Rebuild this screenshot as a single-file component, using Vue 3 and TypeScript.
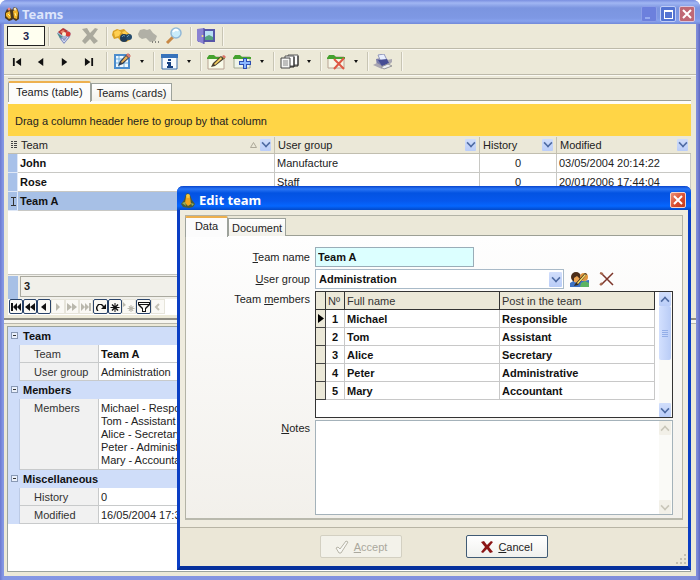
<script setup lang="ts">
import { ref } from 'vue'

interface TeamRow { name: string; group: string; history: number; modified: string; current?: boolean }
interface Member { no: number; name: string; post: string }

const teams: TeamRow[] = [
  { name: 'John', group: 'Manufacture', history: 0, modified: '03/05/2004 20:14:22' },
  { name: 'Rose', group: 'Staff', history: 0, modified: '20/01/2006 17:44:04' },
  { name: 'Team A', group: 'Administration', history: 0, modified: '16/05/2004 17:33:10', current: true },
]
const members: Member[] = [
  { no: 1, name: 'Michael', post: 'Responsible' },
  { no: 2, name: 'Tom', post: 'Assistant' },
  { no: 3, name: 'Alice', post: 'Secretary' },
  { no: 4, name: 'Peter', post: 'Administrative' },
  { no: 5, name: 'Mary', post: 'Accountant' },
]
const groups = ['Administration', 'Manufacture', 'Staff']

const recordCount = ref('3')
const teamName = ref('Team A')
const userGroup = ref('Administration')
const notes = ref('')

const moves = [
  { label: 'First', d: 'M1 1h2v8h-2zM10 1v8l-6-4z' },
  { label: 'Previous', d: 'M8 1v8l-6-4z' },
  { label: 'Next', d: 'M2 1v8l6-4z' },
  { label: 'Last', d: 'M8 1h2v8h-2zM1 1v8l6-4z' },
]
const navigator = [
  { label: 'First record', on: true, d: 'M1 1h2v8h-2zM7 1v8l-4-4zM11 1v8l-4-4z' },
  { label: 'Previous page', on: true, d: 'M6 1v8l-5-4zM11 1v8l-5-4z' },
  { label: 'Previous record', on: true, d: 'M8 1v8l-5-4z' },
  { label: 'Next record', on: false, d: 'M4 1v8l4-4z' },
  { label: 'Next page', on: false, d: 'M1 1v8l5-4zM6 1v8l5-4z' },
  { label: 'Last record', on: false, d: 'M9 1h2v8h-2zM1 1v8l4-4zM5 1v8l4-4z' },
  { label: 'Refresh', on: true, d: 'M2 9L1 7V5l2-3h4l2 2 2-2v5H6l2-2-2-2H4L2.500 5v2l1 2z' },
  { label: 'Save bookmark', on: true, d: 'M5.500 1h1v3l2-2 1 1-2 2h3v1h-3l2 2-1 1-2-2v3h-1V7l-2 2-1-1 2-2h-3V5h3l-2-2 1-1 2 2z' },
  { label: 'Go to bookmark', on: false, d: 'M0 0v5l3-2zM7.500 3h1v2l2-1 0 1-1 1h2v1h-2l1 2h-1l-1-1v2h-1V8l-1 1h-1l1-2h-2V6h2l-1-2h1l1 1z' },
  { label: 'Filter', on: true, d: 'M0 0h12v3L8 7v3H4V7L0 3zM1 1v1h10V1zM2 3l3 3v3h2V6l3-3z' },
]
</script>

<template>
  <main class="window">
    <header class="titlebar">
      <svg class="app-icon" width="16" height="16" viewBox="0 0 16 16">
        <path d="M1 7l2-4 3-1 2 2 2-3 3 1 2 5v6l-3 2-3-2-1 1-3 1-4-3z" fill="#4a3920" />
        <path d="M2 7l4-2 1 7-2 1-3-3zM9 5l4-2 1 4-1 6-3-1z" fill="#f0b429" />
        <circle cx="5" cy="3" r="1.500" fill="#e88" /><circle cx="11" cy="3" r="1.500" fill="#f2dfb5" />
        <path d="M4 8l2 2M11 7l1 3" stroke="#fff0a0" />
      </svg>
      <h1>Teams</h1>
      <div class="win-buttons">
        <button class="win-btn min" aria-label="Minimize"><svg width="14" height="14"><path d="M3 10h5v2H3z" fill="#96abf0" /></svg></button>
        <button class="win-btn" aria-label="Maximize"><svg width="14" height="14"><path d="M3 3h9v9H3zM4 5v6h7V5z" fill="#fff" fill-rule="evenodd" /></svg></button>
        <button class="win-btn close faded" aria-label="Close"><svg width="14" height="14"><path d="M3 3l8 8M11 3l-8 8" stroke="#fff" stroke-width="2" /></svg></button>
      </div>
    </header>

    <div class="client">
      <div class="toolbar main-tools">
        <input v-model="recordCount" class="count" aria-label="Record count" />
        <i class="sep"></i>
        <button class="tool" aria-label="Properties">
          <svg width="18" height="18" viewBox="0 0 18 18"><path d="M2 6l7-5 7 5-1 4-6 6-5-6z" fill="#a9b3d4" /><path d="M3 5l5-4 5 3-6 4z" fill="#b8342f" /><path d="M5 5l3-2 2 1-3 2z" fill="#e98a72" /><path d="M4 9l5 3 6-4-1 3-5 6-4-5z" fill="#8793c4" /><circle cx="13" cy="7" r="2.500" fill="#d83c36" /><circle cx="9" cy="7" r="2" fill="#fff2d0" /><path d="M2 6l3 2 3 2-3 1z" fill="#4b8f86" /><path d="M7 12l2 3 4-5" stroke="#dfe5f5" fill="none" /></svg>
        </button>
        <button class="tool" aria-label="Delete">
          <svg width="18" height="18" viewBox="0 0 18 18"><path d="M1 2l5-1 3 5 5-5 3 1-5 7 5 5-4 3-4-5-5 5-3-3 5-6z" fill="#aaa99d" /></svg>
        </button>
        <i class="sep"></i>
        <button class="tool" aria-label="Find">
          <svg width="22" height="18" viewBox="0 0 22 18"><path d="M1 8l1-4 4-2 3 1 4-1 3 3 4 3-1 5-4 2-5-1-3-3-4 1z" fill="#d9a126" /><path d="M3 5l4-2 3 2-2 4-4 1zM11 5l3-1 3 3-4 1z" fill="#ffd052" /><circle cx="13" cy="11" r="4" fill="#1e3b59" /><circle cx="18" cy="10" r="3" fill="#234b6d" /><path d="M11 10a2 2 0 0 1 3-1M16 10l2-2" stroke="#689ab5" fill="none" /></svg>
        </button>
        <button class="tool" aria-label="Find next">
          <svg width="22" height="18" viewBox="0 0 22 18"><path d="M1 7l2-4 4-1 3 1 3-1 3 4 4 3-2 5-5 1-4-4-4 1-3-2z" fill="#b1b0a6" /><path d="M15 15h1M18 15h1M21 15h1" stroke="#85857e" stroke-width="2" /></svg>
        </button>
        <button class="tool" aria-label="Zoom">
          <svg width="18" height="18" viewBox="0 0 18 18"><path d="M2 16l6-6" stroke="#c88845" stroke-width="3" /><circle cx="11" cy="6" r="5" fill="#c8ebfa" stroke="#92b9d7" stroke-width="1.500" /><path d="M8 5q3-4 5-1" stroke="#fff" stroke-width="2" fill="none" /></svg>
        </button>
        <i class="sep"></i>
        <button class="tool" aria-label="Exit">
          <svg width="18" height="16" viewBox="0 0 18 16"><path d="M1 1h17v13H1z" fill="#5756a9" /><path d="M8 3h8v9H8z" fill="#b8dff5" /><path d="M8 9l4-2 4 2v3H8z" fill="#54a27f" /><path d="M0 1l7-1v16l-7-3z" fill="#8a82d2" /><path d="M7 0v16" stroke="#4a48a0" /><circle cx="5.500" cy="8" r="1" fill="#f8e680" /></svg>
        </button>
        <i class="sep"></i>
      </div>

      <div class="toolbar">
        <button v-for="m in moves" :key="m.label" class="tool move" :aria-label="m.label">
          <svg width="10" height="8" viewBox="0 1 11 8" preserveAspectRatio="none"><path :d="m.d" fill="#111" /></svg>
        </button>
        <i class="sep"></i>
        <button class="tool" aria-label="Edit table">
          <svg width="17" height="17" viewBox="0 0 17 17"><path d="M1 2h14v13H1z" fill="#eef8ff" stroke="#4c8dcd" stroke-width="2" /><path d="M2 6h12M2 10h12M5 3v11M10 3v11" stroke="#70b0df" /><path d="M4 13l2-5 7-7 3 3-7 7z" fill="#333e52" /><path d="M7 9l5-6 2 2-6 5z" fill="#e8af55" /><path d="M12 2l2-2 3 3-2 2z" fill="#d77c71" /></svg>
        </button>
        <button class="drop" aria-label="Edit options"></button>
        <i class="sep"></i>
        <button class="tool" aria-label="Information">
          <svg width="17" height="16" viewBox="0 0 17 16"><path d="M1 1h15v14H1z" fill="#f7fbff" stroke="#376cab" stroke-width="1" /><path d="M0 0h17v4H0z" fill="#3773bb" /><path d="M7 5h3v2H7zM6 8h4v4h2v2H6v-2h1v-2H6z" fill="#174181" /></svg>
        </button>
        <button class="drop" aria-label="Information options"></button>
        <i class="sep"></i>
        <button class="tool" aria-label="Edit record">
          <svg width="19" height="16" viewBox="0 0 19 16"><path d="M1 3h16v12H1z" fill="#f9fbe9" stroke="#b8a393" /><path d="M0 4l2-3h5l2 2h9v2H0z" fill="#45a22e" /><path d="M4 13l2-4 8-7 3 3-9 7z" fill="#4a3e2d" /><path d="M7 10l7-7 1 2-7 6z" fill="#f7d363" /><path d="M15 2l2-1 2 2-2 2z" fill="#da7366" /></svg>
        </button>
        <button class="tool" aria-label="Add record">
          <svg width="19" height="16" viewBox="0 0 19 16"><path d="M1 3h16v11H1z" fill="#eff4e9" stroke="#a3aa92" /><path d="M0 4l2-3h5l2 2h9v2H0z" fill="#45a22e" /><path d="M10 4h4v3h4v4h-4v4h-4v-4H6V7h4z" fill="#2f4fb2" /><path d="M11 5h2v3h4v2h-4v4h-2v-4H7V8h4z" fill="#8cb8ff" /></svg>
        </button>
        <button class="drop" aria-label="Add options"></button>
        <i class="sep"></i>
        <button class="tool" aria-label="Copies">
          <svg width="19" height="16" viewBox="0 0 19 16"><path d="M8 1h10v10H8z" fill="#fff" stroke="#555" /><path d="M18 2v10h-8" stroke="#222" fill="none" /><path d="M5 2h9v10H5z" fill="#fff" stroke="#555" /><path d="M14 3v10H6" stroke="#222" fill="none" /><path d="M1 4h9v10H1z" fill="#f5f5f3" stroke="#444" /><path d="M3 7h5M3 9h5M3 11h5" stroke="#888" /></svg>
        </button>
        <button class="drop" aria-label="Copy options"></button>
        <i class="sep"></i>
        <button class="tool" aria-label="Delete record">
          <svg width="19" height="16" viewBox="0 0 19 16"><path d="M1 3h16v11H1z" fill="#f7f6e7" stroke="#b8a393" /><path d="M0 4l2-3h5l2 2h9v2H0z" fill="#45a22e" /><path d="M7 5l10 10M17 4L7 15" stroke="#de5844" stroke-width="2" /></svg>
        </button>
        <button class="drop" aria-label="Delete options"></button>
        <i class="sep"></i>
        <button class="tool" aria-label="Print">
          <svg width="20" height="16" viewBox="0 0 20 16"><path d="M3 5l5-1 7 6-2 5-9-3z" fill="#7c7ea9" /><path d="M5 1l6-1 3 6-6 2z" fill="#e9efff" stroke="#9298bb" /><path d="M0 11l4-2 7 4-2 2zM14 6l5-1v3l-4 4z" fill="#aaa7b2" /><path d="M5 6l9-1 2 4-7 3z" fill="#454c94" /><path d="M8 13l7-3 4 2-8 3z" fill="#eef0f5" stroke="#999" /></svg>
        </button>
        <i class="sep"></i>
      </div>

      <div class="sheet">
        <div class="tabs">
          <button class="tab active">Teams (table)</button>
          <button class="tab">Teams (cards)</button>
        </div>
        <div class="group-panel">Drag a column header here to group by that column</div>
        <table class="teams">
          <colgroup><col class="c-ind" /><col /><col class="c-group" /><col class="c-hist" /><col class="c-mod" /></colgroup>
          <thead>
            <tr>
              <th class="ind"><svg width="6" height="8"><path d="M0 .5h2M0 2.500h2M0 4.500h2M0 6.500h2M3 .5h3M3 2.500h3M3 4.500h3M3 6.500h3" stroke="#444" /></svg></th>
              <th><div class="head"><span>Team</span><svg class="sort" width="7" height="6"><path d="M.5 5.500h6L3.500.5z" fill="none" stroke="#aca899" /></svg><button class="filter" aria-label="Filter Team"></button></div></th>
              <th><div class="head"><span>User group</span><button class="filter" aria-label="Filter User group"></button></div></th>
              <th><div class="head"><span>History</span><button class="filter" aria-label="Filter History"></button></div></th>
              <th><div class="head"><span>Modified</span><button class="filter" aria-label="Filter Modified"></button></div></th>
            </tr>
          </thead>
          <tbody>
            <tr v-for="t in teams" :key="t.name" :class="{ current: t.current }">
              <td class="ind"><svg v-if="t.current" width="6" height="9"><path d="M0 .5h5M2.500 1v7M0 8.500h5" stroke="#333" fill="none" /></svg></td>
              <td class="bold">{{ t.name }}</td>
              <td>{{ t.group }}</td>
              <td class="mid">{{ t.history }}</td>
              <td>{{ t.modified }}</td>
            </tr>
          </tbody>
        </table>
        <div class="blank"></div>
        <div class="summary"><i></i><div>3</div></div>
        <div class="navigator">
          <button v-for="n in navigator" :key="n.label" class="nav" :class="{ on: n.on }" :disabled="!n.on" :aria-label="n.label">
            <svg width="12" height="10" viewBox="0 0 12 10"><path :d="n.d" fill-rule="evenodd" /></svg>
          </button>
          <button class="nav slide" aria-label="Scroll left"><svg width="12" height="10"><path d="M7 2L4 5l3 3" fill="none" stroke="#c4c1b5" stroke-width="2" /></svg></button>
        </div>
      </div>

      <div class="splitter"></div>

      <div class="details">
        <table class="props">
          <colgroup><col class="p-ind" /><col class="p-name" /><col /></colgroup>
          <tbody>
            <tr class="group"><th colspan="3"><button class="fold" aria-label="Collapse Team"></button>Team</th></tr>
            <tr><td></td><th>Team</th><td class="bold">Team A</td></tr>
            <tr><td></td><th>User group</th><td>Administration</td></tr>
            <tr class="group"><th colspan="3"><button class="fold" aria-label="Collapse Members"></button>Members</th></tr>
            <tr class="tall"><td></td><th>Members</th><td><div v-for="m in members" :key="m.no">{{ m.name }} - {{ m.post }}</div></td></tr>
            <tr class="group"><th colspan="3"><button class="fold" aria-label="Collapse Miscellaneous"></button>Miscellaneous</th></tr>
            <tr><td></td><th>History</th><td>0</td></tr>
            <tr><td></td><th>Modified</th><td>16/05/2004 17:33:10</td></tr>
          </tbody>
        </table>
      </div>
    </div>

    <section class="dialog" role="dialog" aria-label="Edit team">
      <header class="dialog-title">
        <svg width="14" height="16" viewBox="0 0 14 16"><path d="M5 2l2-1 2 2 2 5 3 4-2 3-4 1-6-1-2-3 3-4z" fill="#4a5a38" /><path d="M5 5h4l1 7-3 2-3-3z" fill="#efa51e" /><circle cx="7" cy="4" r="2" fill="#f8c940" /><path d="M1 11l3-1 1 4zM10 11l3 1-2 2z" fill="#91b35d" /></svg>
        <h2>Edit team</h2>
        <button class="win-btn close" aria-label="Close dialog"><svg width="14" height="14"><path d="M3 3l8 8M11 3l-8 8" stroke="#fff" stroke-width="2" /></svg></button>
      </header>
      <div class="frame">
        <div class="tabs dialog-tabs">
          <button class="tab active">Data</button>
          <button class="tab">Document</button>
        </div>
        <form id="team-form" class="form" @submit.prevent>
          <label for="team-name"><u>T</u>eam name</label>
          <input id="team-name" v-model="teamName" class="field name" />

          <label for="user-group"><u>U</u>ser group</label>
          <div class="group-row">
            <div class="combo">
              <select id="user-group" v-model="userGroup"><option v-for="g in groups" :key="g">{{ g }}</option></select>
              <i class="filter"></i>
            </div>
            <button type="button" class="mini" aria-label="Edit user group">
              <svg width="19" height="16" viewBox="0 0 19 16"><path d="M0 12l5-3 7 1 7-1v7H0z" fill="#3d72c4" /><path d="M11 12l4-2 4 2v4h-9z" fill="#5cb463" /><circle cx="6" cy="6" r="5" fill="#4b2d19" /><circle cx="14" cy="6" r="4" fill="#e1963f" /><path d="M4 7l3-2 3 3-2 4-4-1z" fill="#eba352" /><path d="M5 13L15 2l2 1L8 14l-4 1z" fill="#332a20" /><path d="M7 12l8-9 1 1-8 9z" fill="#ffe36d" /></svg>
            </button>
            <button type="button" class="mini" aria-label="Clear user group">
              <svg width="16" height="16" viewBox="0 0 16 16"><path d="M2 2l12 12M14 2L2 14" stroke="#7c3429" stroke-width="1.500" /><path d="M1 2l3 1M3 12l-2 2" stroke="#a76a50" stroke-width="2" /></svg>
            </button>
          </div>

          <span id="members-label" class="label top">Team <u>m</u>embers</span>
          <div class="members-box">
            <table class="members" aria-labelledby="members-label">
              <colgroup><col class="m-ind" /><col class="m-no" /><col /><col /></colgroup>
              <thead><tr><th></th><th>Nº</th><th>Full name</th><th>Post in the team</th></tr></thead>
              <tbody>
                <tr v-for="m in members" :key="m.no">
                  <td class="marker"><svg v-if="m.no === 1" width="6" height="9"><path d="M0 0v9l6-4.500z" /></svg></td>
                  <td>{{ m.no }}</td><td>{{ m.name }}</td><td>{{ m.post }}</td>
                </tr>
              </tbody>
            </table>
            <div class="scroll">
              <i class="filter up"></i>
              <div class="thumb"><svg width="6" height="7"><path d="M0 .5h6M0 2.500h6M0 4.500h6M0 6.500h6" stroke="#93aee8" /></svg></div>
              <i class="filter down"></i>
            </div>
          </div>

          <label for="notes" class="top"><u>N</u>otes</label>
          <div class="notes-box">
            <textarea id="notes" v-model="notes"></textarea>
            <div class="scroll off"><i class="filter up"></i><i class="filter down"></i></div>
          </div>
        </form>
      </div>
      <footer class="actions">
        <button class="action" disabled>
          <svg width="14" height="14" viewBox="0 0 14 14"><path d="M1 8l2-1 2 2 6-8 2 1-7 11H4z" fill="#f8f8f4" stroke="#b7b5a8" /></svg>
          <span><u>A</u>ccept</span>
        </button>
        <button class="action">
          <svg width="12" height="12" viewBox="0 0 12 12"><path d="M0 1l3-1 3 4 4-4 2 1-4 5 4 5-3 1-3-4-4 4-2-1 4-5z" fill="#8b1515" /></svg>
          <span><u>C</u>ancel</span>
        </button>
        <svg class="grip" width="12" height="12"><path d="M9 1h2v2H9zM5 5h2v2H5zM9 5h2v2H9zM1 9h2v2H1zM5 9h2v2H5zM9 9h2v2H9z" fill="#c4c0b0" /></svg>
      </footer>
    </section>
  </main>
</template>

<style>
body { background: #fff; }
</style>

<style scoped>
.window, .window * { box-sizing: border-box; }
.window {
  position: relative;
  display: flex;
  flex-direction: column;
  min-height: 100vh;
  padding: 0 4px 4px;
  overflow: hidden;
  border-radius: 7px 7px 0 0;
  background: linear-gradient(90deg, #6c79cf, #8497e4 3px, #7f8cda calc(100% - 3px), #5d67c0);
  color: #222;
  font: 11px/14px "Liberation Sans", Arial, sans-serif;
}
button, input, select, textarea { margin: 0; padding: 0; border: 0; background: none; color: inherit; font: inherit; outline: 0; }
button { display: inline-flex; align-items: center; justify-content: center; }
svg { display: block; flex: none; }
table { width: 100%; border-spacing: 0; table-layout: fixed; }
th, td { padding: 0; font-weight: normal; text-align: left; white-space: nowrap; overflow: hidden; }
.bold { font-weight: bold; color: #111; }

.titlebar {
  display: flex;
  align-items: center;
  gap: 2px;
  height: 24px;
  margin: 0 -4px;
  padding: 3px 5px 0 4px;
  background: linear-gradient(#7a8fe0, #a1b6f3 3px, #7b95e0 8px, #7e98e4 18px, #87a2ee 21px, #7189d8);
}
h1, h2 { flex: 1; margin: 0; font: bold 13px/16px "Noto Sans", "Open Sans", sans-serif; color: #dde5fb; }
.win-buttons { display: flex; gap: 3px; }
.win-btn { width: 16px; height: 16px; border: 1px solid #c0cdf6; border-radius: 2px; background: #5373d2; }
.win-btn.min { border-color: #8c9fe8; background: #6c80dd; }
.win-btn.close { border-color: #f6d5cb; background: linear-gradient(135deg, #ec8f74, #d8492a 60%, #bf3d20); }
.win-btn.close.faded { border-color: #d6c6e0; background: #bf6874; }

.client { display: flex; flex: 1; flex-direction: column; background: #ece9d8; }
.toolbar { display: flex; align-items: center; height: 26px; padding-left: 1px; border-bottom: 1px solid #bdbaaa; box-shadow: 0 1px #faf9f3; }
.toolbar.main-tools { height: 25px; padding-left: 3px; }
.count { width: 38px; height: 20px; border: 1px solid #222; background: #fffff0; color: #22264e; font-weight: bold; text-align: center; }
.sep { width: 1px; height: 19px; margin: 0 2px 0 5px; background: #c8c5b4; box-shadow: 1px 0 #f8f6ee; }
.main-tools .sep { margin-left: 3px; }
.tool { width: 26px; height: 22px; }
.tool.move { width: 24px; }
.drop { width: 13px; height: 22px; }
.drop::after { content: ""; border: 3px solid transparent; border-top-color: #111; border-bottom: 0; border-left-width: 2px; border-right-width: 2px; }

.sheet { display: flex; flex-direction: column; margin: 3px 5px 0 4px; border-top: 1px solid #aca899; }
.tabs { display: flex; align-items: flex-end; height: 25px; border-bottom: 3px solid #fcfcfa; background: #ebe8d8; box-shadow: inset 0 -1px #9c9f95; }
.tab { height: 18px; padding: 0 5px; border: 1px solid #9da29b; border-bottom: 0; background: linear-gradient(#fff, #f2f1ea); }
.tab.active { height: 20px; padding: 0 7px; margin-bottom: -1px; border-top: 2px solid #edb04f; border-color: #edb04f #9da29b #fff; background: #fcfcfc; border-radius: 2px 2px 0 0; }
.sheet .tab.active { height: 21px; padding-bottom: 2px; }
.group-panel { height: 32px; padding-left: 7px; background: #ffd546; line-height: 34px; }

.c-ind { width: 10px; } .c-group { width: 205px; } .c-hist { width: 77px; } .c-mod { width: 134px; }
.teams th { height: 18px; background: #ebe8d8; border-bottom: 1px solid #c1beaf; }
.teams td { height: 19px; padding: 0 2px; border-right: 1px solid #c8c8c4; border-bottom: 1px solid #c8c8c4; background: #fff; }
.head { display: flex; align-items: center; gap: 3px; height: 16px; padding: 0 3px; border-right: 1px solid #c5c2b2; }
th:last-child .head { border-right: 0; }
.head span { flex: 1; }
.teams th.ind { padding-left: 3px; }
.teams td.ind { padding: 0 0 0 3px; border-color: #dfe8f7; background: #a8c1e9; }
.teams .current td { background: #a7c0e6; }
.teams td.mid { text-align: center; }
.filter {
  display: flex;
  align-items: center;
  justify-content: center;
  flex: none;
  width: 11px;
  height: 12px;
  border-radius: 1px;
  background: linear-gradient(#d1defb, #bacdf8);
}
.filter::after { content: ""; width: 6px; height: 6px; margin-bottom: 3px; border: solid #4f6ba3; border-width: 0 2px 2px 0; transform: rotate(45deg) scale(.8); }
.filter.up::after { margin: 3px 0 0; transform: rotate(225deg) scale(.8); }
.blank { height: 63px; background: #fff; }
.summary { display: flex; height: 25px; padding-top: 1px; border-top: 1px solid #c4c4be; background: #f1f0ea; }
.summary i { width: 10px; background: #a7c0e6; }
.summary div { flex: 1; margin: 0 0 2px 2px; padding-left: 3px; border: 1px solid #aaa99f; background: #f1f0ea; font-weight: bold; line-height: 19px; }
.navigator { display: flex; height: 16px; padding-left: 1px; background: #fff; }
.nav { width: 14px; height: 15px; border: 1px solid #e7e5db; background: #faf9f5; fill: #bab8ad; }
.nav.on { border-color: #294369; border-radius: 2px; fill: #111; }
.nav:nth-child(7), .nav:nth-child(10) { width: 15px; }
.splitter { height: 6px; margin: 3px 0 2px; border-top: 2px solid #8f8d83; background: #f6f5ef; border-bottom: 1px solid #b9b7ac; }

.details { flex: 1; margin: 0 5px 4px 3px; border: 1px solid #9ba39e; background: #fff; }
.p-ind { width: 12px; } .p-name { width: 79px; }
.props th, .props td { height: 18px; padding: 0 2px; border-bottom: 1px solid #c8cacb; }
.props th { padding-left: 14px; border-right: 1px solid #c8cacb; background: #f1f1f1; color: #333; }
.props td:first-child { border: 0; background: #cfddf9; border-right: 1px solid #bccae5; }
.props .group th { padding: 0 0 0 15px; border: 0; background: #cfddf9; color: #111; font-weight: bold; position: relative; }
.fold { position: absolute; left: 3px; top: 5px; width: 7px; height: 7px; border: 1px solid #8999b4; background: #eaf0fb; }
.fold::after { content: ""; width: 3px; height: 1px; background: #333; }
.props .tall th, .props .tall td { height: 71px; padding-top: 3px; vertical-align: top; line-height: 13px; }

.dialog {
  position: absolute;
  top: 186px;
  left: 177px;
  right: 9px;
  border: solid #0a3ec4;
  border-width: 0 3px 4px;
  border-bottom-color: #06309c;
  border-radius: 6px 6px 0 0;
  background: #efecdf;
}
.dialog-title {
  display: flex;
  align-items: center;
  gap: 4px;
  height: 24px;
  margin: 0 -3px;
  padding: 3px 5px 0 4px;
  border-radius: 6px 6px 0 0;
  background: linear-gradient(#0844cd, #2a76f5 3px, #0353e2 7px, #0658ed 15px, #0566ff 20px, #0349c8);
}
h2 { color: #fff; }
.frame { margin: 5px 5px 7px; border: 1px solid #b3b3a6; border-bottom: 2px solid #b9b9ad; }
.dialog-tabs { height: 20px; border-bottom: 0; }
.dialog-tabs .tab { padding: 0 3px; }
.dialog-tabs .tab.active { width: 43px; height: 21px; margin-left: -1px; padding: 0 0 4px; justify-content: center; }
.form {
  display: grid;
  grid-template-columns: 124px minmax(0, 1fr);
  gap: 2px 5px;
  padding: 11px 9px 3px 0;
  background: linear-gradient(#fefefe, #f2f0eb);
}
.form label, .label { text-align: right; line-height: 20px; }
.form .top { line-height: 16px; }
.field { height: 20px; padding: 0 2px; border: 1px solid #9aadb8; font-weight: bold; color: #111; }
.name { width: 159px; background: #dcffff; }
.group-row { display: flex; align-items: center; gap: 4px; }
.combo { display: flex; align-items: center; width: 249px; height: 20px; padding-right: 1px; border: 1px solid #a9bac8; background: #fff; }
.combo select { flex: 1; min-width: 0; height: 18px; padding-left: 3px; appearance: none; font-weight: bold; color: #111; }
.combo .filter { width: 13px; height: 15px; }
.mini { width: 23px; height: 18px; }
.members-box { display: flex; align-items: flex-start; height: 127px; border: 1px solid #333; background: #fff; }
.members { flex: 1 1 0; width: 100%; min-width: 0; }
.m-ind { width: 10px; } .m-no { width: 19px; }
.members th { height: 18px; padding-left: 2px; border: solid #333; border-width: 0 1px 1px 0; background: #ebe8d8; color: #333; }
.members td { height: 18px; padding-left: 2px; border: solid #c8c8c8; border-width: 0 1px 1px 0; font-weight: bold; color: #111; }
.members td:nth-child(2) { padding: 0; text-align: center; }
.members td.marker { border-color: #444; background: #ebe8d8; }
.scroll { display: flex; flex: none; flex-direction: column; align-self: stretch; width: 13px; margin-left: 4px; background: #fafaf7; }
.scroll .filter { width: 12px; height: 14px; }
.scroll .down { margin-top: auto; }
.thumb { display: flex; align-items: center; justify-content: center; width: 12px; height: 54px; border-radius: 2px; background: linear-gradient(90deg, #d3e0fe, #b9ccf6); }
.scroll.off .filter { background: #f2f0e8; }
.scroll.off .filter::after { border-color: #c9c6b9; }
.notes-box { display: flex; height: 95px; border: 1px solid #a4b2ba; background: #fff; }
.notes-box textarea { flex: 1; resize: none; overflow: hidden; }
.actions { position: relative; display: flex; justify-content: center; gap: 64px; height: 39px; padding-top: 7px; border-top: 1px solid #b8b5a5; background: #ebe7d7; }
.action { gap: 5px; width: 82px; height: 23px; border: 1px solid #405b75; border-radius: 2px; background: linear-gradient(#fff, #f0f1ee); }
.action:disabled { border-color: #d3d0c2; background: #f3f2ea; color: #aaa89d; }
.grip { position: absolute; right: 1px; bottom: 1px; }
</style>
